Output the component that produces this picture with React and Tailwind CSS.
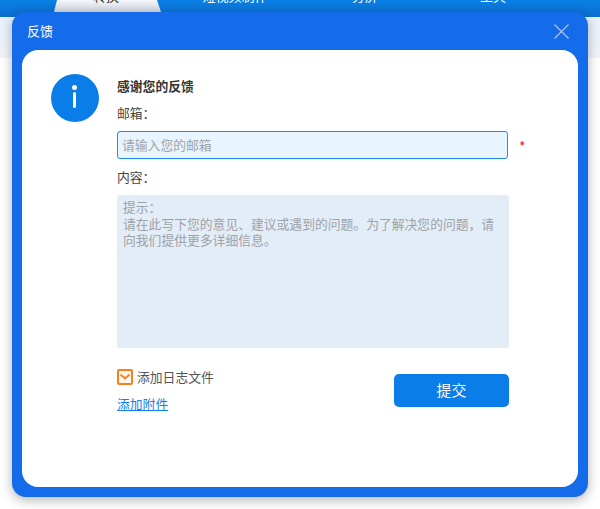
const cjk = "font-['Noto_Sans_CJK_SC','Noto_Sans',sans-serif]";

const TopTabs = () => (
  <div className="h-[58px] bg-gradient-to-b from-[#e4edf9] to-[#f1f5fb]">
    <div className="flex h-[17px] bg-gradient-to-b from-[#0a80e6] to-[#0a6fd0] text-[13px] leading-[18px] overflow-hidden pl-[54px]">
      <div className="w-[107px] h-[17px] pr-[3px] bg-gradient-to-b from-[#f4f7fb] to-[#bfc9d6] [clip-path:polygon(3px_0,103px_0,107px_12px,107px_100%,0_100%,0_12px)] text-[#333] text-center overflow-hidden">
        <div className="-mt-[13px]">转换</div>
      </div>
      <div className="w-[148px] text-center text-white"><div className="-mt-[13px]">短视频制作</div></div>
      <div className="w-[112px] text-center text-white"><div className="-mt-[13px]">分屏</div></div>
      <div className="w-[144px] text-center text-white"><div className="-mt-[13px]">工具</div></div>
    </div>
  </div>
);

const InfoIcon = () => (
  <div className="w-12 h-12 rounded-full bg-[#0a7de8] flex flex-col items-center shrink-0">
    <div className="w-[5px] h-[5px] rounded-full bg-white mt-[11px]" />
    <div className="w-[3.5px] h-[16px] rounded-full bg-white mt-[2px]" />
  </div>
);

const Feedback = () => (
  <div className="absolute left-[12px] top-[12px] w-[576px] h-[485px] rounded-[14px] bg-[#146ceb] px-[10px] pb-[10px] flex flex-col shadow-[0_3px_12px_rgba(0,0,0,0.3)]">
    <div className="h-[38px] flex items-center justify-between shrink-0">
      <span className="text-white text-[13px] pl-[5px]">反馈</span>
      <svg width="15" height="15" viewBox="0 0 15 15" className="mr-[9px]">
        <path d="M0.5 0.5L14.5 14.5M14.5 0.5L0.5 14.5" stroke="#a9c8f6" strokeWidth="1.1" fill="none" />
      </svg>
    </div>
    <div className="flex-1 bg-white rounded-[16px] flex pl-[28.5px] pt-[24px]">
      <InfoIcon />
      <div className="ml-[18.5px] w-[392px] flex flex-col text-[12.8px]">
        <div className="leading-[18px] font-semibold text-[#333] mt-[3px]">感谢您的反馈</div>
        <div className="leading-[18px] text-[#444] mt-[9px]">邮箱：</div>
        <div className="relative mt-[9px] w-[391px] h-[28px] bg-[#e8f4fe] border border-[#1e8cf5] rounded-[3px] flex items-center pl-[4px] text-[#9ea3a8]">
          请输入您的邮箱
          <span className="absolute left-[401px] top-[4px] text-[14px] text-[#f02020]">*</span>
        </div>
        <div className="leading-[18px] text-[#444] mt-[9px]">内容：</div>
        <div className="mt-[9px] w-[392px] h-[153px] bg-[#e3edf8] rounded-[3px] px-[6px] pt-[4px] leading-[16.5px] text-[#9ea3a8]">
          提示：
          <br />
          请在此写下您的意见、建议或遇到的问题。为了解决您的问题，请向我们提供更多详细信息。
        </div>
        <div className="flex justify-between mt-[20px]">
          <div className="flex flex-col">
            <div className="flex items-center">
              <div className="w-[16px] h-[16px] rounded-[2px] border-2 border-[#f5821f] bg-[#fff6ec] flex items-center justify-center">
                <svg width="12" height="12" viewBox="0 0 12 12">
                  <path d="M1.5 3.5L6 7.5L10.5 3.5" stroke="#f5821f" strokeWidth="1.8" fill="none" />
                </svg>
              </div>
              <span className="ml-[4px] leading-[18px] text-[#555]">添加日志文件</span>
            </div>
            <a className="mt-[9px] leading-[18px] text-[#0f80ec] underline">添加附件</a>
          </div>
          <button className="w-[115px] h-[33px] mt-[6px] bg-[#0a7de8] rounded-[5px] text-white text-[15px]">提交</button>
        </div>
      </div>
    </div>
  </div>
);

export default function App() {
  return (
    <div className={`relative w-[600px] h-[509px] bg-white overflow-hidden ${cjk}`}>
      <TopTabs />
      <Feedback />
    </div>
  );
}
